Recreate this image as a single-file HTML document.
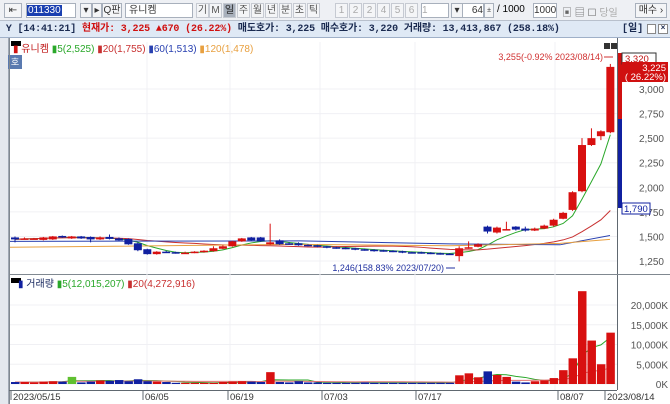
<!DOCTYPE html>
<html><head><meta charset="utf-8"><style>
*{margin:0;padding:0;box-sizing:border-box}
body{width:670px;height:404px;overflow:hidden;background:#fff;font-family:"Liberation Sans","Noto Sans CJK KR",sans-serif;font-size:11px;position:relative}
.tb{position:absolute;left:0;top:0;width:670px;height:21px;background:#eef0f4;border-bottom:1px solid #b8c0cc}
.bx{position:absolute;top:3px;height:15px;border:1px solid #a8b0bc;background:#fff;font-size:10px;line-height:13px;text-align:center;color:#333}
.gb{position:absolute;top:3px;height:15px;width:13px;border:1px solid #c6cad2;background:#f4f5f7;font-size:10px;line-height:13px;text-align:center;color:#555}
.info{position:absolute;left:0;top:21px;width:670px;height:17px;background:#dfe9f5;border-bottom:1px solid #9fb0c8;font-family:"Liberation Mono","Noto Sans CJK KR",monospace;font-weight:bold;font-size:10px;letter-spacing:-0.15px;line-height:17px;color:#1a2a50;white-space:nowrap;overflow:hidden}
.r{color:#d01010}
</style></head><body>
<div class="tb">
 <div class="bx" style="left:4px;width:18px;background:#f4f5f7">⇤</div>
 <div class="bx" style="left:26px;width:50px;text-align:left"><span style="background:#1a3fb0;color:#fff;padding:0 1px">011330</span></div>
 <div class="bx" style="left:80px;width:12px;background:#f4f5f7">▾</div>
 <div class="bx" style="left:92px;width:10px;background:#f4f5f7">▸</div>
 <div class="bx" style="left:102px;width:20px;background:#f4f5f7">Q판</div>
 <div class="bx" style="left:125px;width:68px;text-align:left;padding-left:3px">유니켐</div>
 <div class="gb" style="left:196px">기</div><div class="gb" style="left:209px">M</div>
 <div class="gb" style="left:223px;background:#a8b0bc;color:#222">일</div>
 <div class="gb" style="left:237px">주</div><div class="gb" style="left:251px">월</div><div class="gb" style="left:265px">년</div><div class="gb" style="left:279px">분</div><div class="gb" style="left:293px">초</div><div class="gb" style="left:307px">틱</div>
 <div class="gb" style="left:335px;color:#aaa">1</div><div class="gb" style="left:349px;color:#aaa">2</div><div class="gb" style="left:363px;color:#aaa">2</div><div class="gb" style="left:377px;color:#aaa">4</div><div class="gb" style="left:391px;color:#aaa">5</div><div class="gb" style="left:405px;color:#aaa">6</div>
 <div class="bx" style="left:421px;width:28px;text-align:left;color:#aaa">1</div>
 <div class="bx" style="left:451px;width:12px;background:#f4f5f7">▾</div>
 <div class="bx" style="left:462px;width:22px;text-align:right">64</div>
 <div class="bx" style="left:484px;width:10px;background:#f4f5f7;font-size:7px">±</div>
 <div style="position:absolute;left:497px;top:4px;font-size:10px">/ 1000</div>
 <div class="bx" style="left:533px;width:24px">1000</div>
 <div style="position:absolute;left:562px;top:4px;font-size:10px;color:#666">▣ ▤ ☐ <span style="color:#aaa">당일</span></div>
 <div class="bx" style="left:635px;width:32px;background:#f4f5f7">매수 ›</div>
</div>
<div class="info">&nbsp;Y [14:41:21] <span class="r">현재가: 3,225 ▲670 (26.22%)</span> 매도호가: 3,225 매수호가: 3,220 거래량: 13,413,867 (258.18%)<span style="position:absolute;left:622px;letter-spacing:0">[일]</span><span style="position:absolute;left:647px;top:3px;width:9px;height:10px;border:1px solid #888;background:#fff"></span><span style="position:absolute;left:658px;top:3px;width:10px;height:10px;border:1px solid #888;background:#fff;font-size:8px;line-height:8px;text-align:center">×</span></div>
<div style="position:absolute;left:0;top:38px;width:9px;height:366px;background:#e4e8ee;border-right:1px solid #a0a8b4"></div>
<div style="position:absolute;left:8px;top:55px;width:14px;height:14px;background:#5a7ab0;color:#fff;font-size:9px;text-align:center;line-height:14px">호</div>
<svg id="c" width="670" height="404" style="position:absolute;left:0;top:0" xmlns="http://www.w3.org/2000/svg" font-family="Liberation Sans, Noto Sans CJK KR, sans-serif"></svg>
<script>
var s='';
function R(x,y,w,h,f,st){s+='<rect x="'+x+'" y="'+y+'" width="'+w+'" height="'+h+'" fill="'+f+'"'+(st?' stroke="'+st+'"':'')+'/>';}
function L(x1,y1,x2,y2,c){s+='<line x1="'+x1+'" y1="'+y1+'" x2="'+x2+'" y2="'+y2+'" stroke="'+c+'" stroke-width="1"/>';}
function T(x,y,t,c,a,fs){s+='<text x="'+x+'" y="'+y+'" fill="'+c+'" font-size="'+(fs||10)+'"'+(a?' text-anchor="'+a+'"':'')+'>'+t+'</text>';}
L(9.5,38,9.5,404,'#808890');L(617.5,38,617.5,390,'#606870');L(9,274.5,670,274.5,'#808890');L(9,390.5,617,390.5,'#606870');
var py=function(p){return 89+(3000-p)*0.0983};
[1250,1500,1750,2000,2250,2500,2750,3000].forEach(function(p){var y=py(p);L(10,y,617,y,'#f0f0f4');T(664,y+4,p.toLocaleString('en-US'),'#555','end');});
var vy=function(v){return 384-v*0.00395};
[0,5000,10000,15000,20000].forEach(function(v){var y=vy(v);L(10,y,617,y,'#f0f0f4');T(668,y+4,v.toLocaleString('en-US')+'K','#555','end');});
[147,230,320,415,555].forEach(function(x){L(x,42,x,390,'#f0f0f4')});
var d=[
[1490,1470,1500,1440,500],[1480,1480,1490,1470,500],[1475,1480,1485,1470,400],[1465,1490,1495,1460,600],[1470,1500,1505,1465,700],
[1505,1490,1510,1485,600],[1480,1500,1505,1475,1800],[1500,1480,1505,1475,400],[1495,1470,1500,1440,600],[1470,1490,1500,1465,900],
[1495,1475,1520,1470,800],[1480,1460,1490,1455,1000],[1475,1420,1480,1415,700],[1430,1360,1440,1350,1200],[1370,1320,1375,1315,700],
[1320,1345,1350,1315,600],[1345,1340,1355,1335,500],[1340,1330,1345,1325,300],[1335,1335,1345,1330,300],[1335,1345,1350,1330,300],
[1340,1355,1360,1335,300],[1350,1380,1400,1345,300],[1375,1400,1410,1370,500],[1400,1450,1455,1395,600],[1450,1480,1485,1445,700],
[1490,1460,1495,1455,600],[1490,1450,1495,1445,500],[1420,1440,1630,1415,3000],[1460,1420,1470,1415,500],[1430,1420,1440,1415,400],
[1430,1410,1440,1405,700],[1415,1405,1420,1400,400],[1410,1395,1415,1390,400],[1400,1385,1405,1380,300],[1390,1380,1395,1375,300],
[1385,1375,1390,1370,300],[1380,1365,1385,1360,300],[1370,1360,1375,1355,400],[1365,1350,1370,1345,300],[1360,1350,1365,1345,300],
[1355,1345,1360,1340,300],[1350,1335,1355,1330,300],[1340,1335,1345,1330,300],[1340,1330,1345,1325,300],[1335,1325,1340,1320,300],
[1330,1320,1335,1315,300],[1325,1320,1330,1315,300],[1300,1380,1400,1246,2200],[1380,1390,1450,1375,2700],[1395,1420,1430,1390,1700],
[1600,1550,1610,1530,3200],[1540,1590,1600,1530,2300],[1575,1575,1650,1565,1800],[1600,1570,1605,1560,600],[1580,1560,1600,1550,400],
[1560,1580,1590,1555,700],[1580,1610,1620,1575,900],[1610,1670,1680,1600,1500],[1680,1740,1750,1675,3500],[1770,1950,1960,1760,6500],
[1960,2430,2500,1950,23500],[2430,2500,2600,2420,11000],[2520,2570,2580,2480,5000],[2560,3225,3255,2550,13000]];
var X=function(i){return 11+i*9.45};
function ma(n,f){var p=[];for(var i=0;i<d.length;i++){var a=0,c=0;for(var j=Math.max(0,i-n+1);j<=i;j++){a+=d[j][f];c++}p.push(X(i)+4+','+(f==1?py(a/c):vy(a/c)))}return p.join(' ')}
s+='<polyline points="'+ma(5,1)+'" fill="none" stroke="#2aa82a"/>';
s+='<polyline points="'+ma(20,1)+'" fill="none" stroke="#c83030"/>';
s+='<polyline points="10,'+py(1450)+' 300,'+py(1455)+' 450,'+py(1425)+' 560,'+py(1415)+' 610,'+py(1510)+'" fill="none" stroke="#2840b0"/>';
s+='<polyline points="10,'+py(1390)+' 300,'+py(1420)+' 450,'+py(1405)+' 560,'+py(1430)+' 610,'+py(1470)+'" fill="none" stroke="#e8a040"/>';
s+='<polyline points="'+ma(5,4)+'" fill="none" stroke="#2aa82a"/>';
s+='<polyline points="'+ma(20,4)+'" fill="none" stroke="#e07070"/>';
d.forEach(function(c,i){var x=X(i),up=c[1]>=c[0],col=up?'#d81010':'#1020a0';var t=py(Math.max(c[0],c[1])),b=py(Math.min(c[0],c[1]));
L(x+4,py(c[2]),x+4,py(c[3]),col);R(x,t,8,Math.max(1.5,b-t),col);
var h=c[4]*0.00395;R(x,384-h,8.5,h,i==6?'#60c030':col);});
T(603,60,'3,255(-0.92% 2023/08/14)','#d03030','end',9);L(604,57,613,57,'#d03030');
T(444,271,'1,246(158.83% 2023/07/20)','#2030a0','end',9);L(446,268,455,268,'#2030a0');
R(618,53,4,66,'#d01010');R(618,119,4,89,'#1020a0');
R(622,53,34,11,'#fff','#303030');T(625,62,'3,320','#c01010',null,9.5);
R(622,62,46,20,'#d01010');T(666,71,'3,225','#fff','end',9.5);T(666,80,'( 26.22%)','#fff','end',9.5);
R(622,203,28,11,'#fff','#1020a0');T(624,212,'1,790','#1020a0',null,9.5);
R(604,43,6,6,'#333');R(611,43,6,6,'#333');
R(11,41,10,5,'#000');T(13,52,'<tspan fill="#d01010">▮</tspan> <tspan fill="#c01818">유니켐</tspan> <tspan fill="#2aa82a">▮5(2,525)</tspan> <tspan fill="#c83030">▮20(1,755)</tspan> <tspan fill="#2840b0">▮60(1,513)</tspan> <tspan fill="#e8a040">▮120(1,478)</tspan>','#333',null,10);
R(11,278,10,5,'#000');T(18,287,'<tspan fill="#1020a0">▮</tspan> <tspan fill="#1a2a60">거래량</tspan> <tspan fill="#2aa82a">▮5(12,015,207)</tspan> <tspan fill="#c83030">▮20(4,272,916)</tspan>','#333',null,10);
[[11,'2023/05/15'],[143,'06/05'],[228,'06/19'],[322,'07/03'],[416,'07/17'],[558,'08/07'],[605,'2023/08/14']].forEach(function(a){L(a[0],390,a[0],400,'#606870');T(a[0]+2,400,a[1],'#333',null,9.5)});
document.getElementById('c').innerHTML=s;
</script>
</body></html>
